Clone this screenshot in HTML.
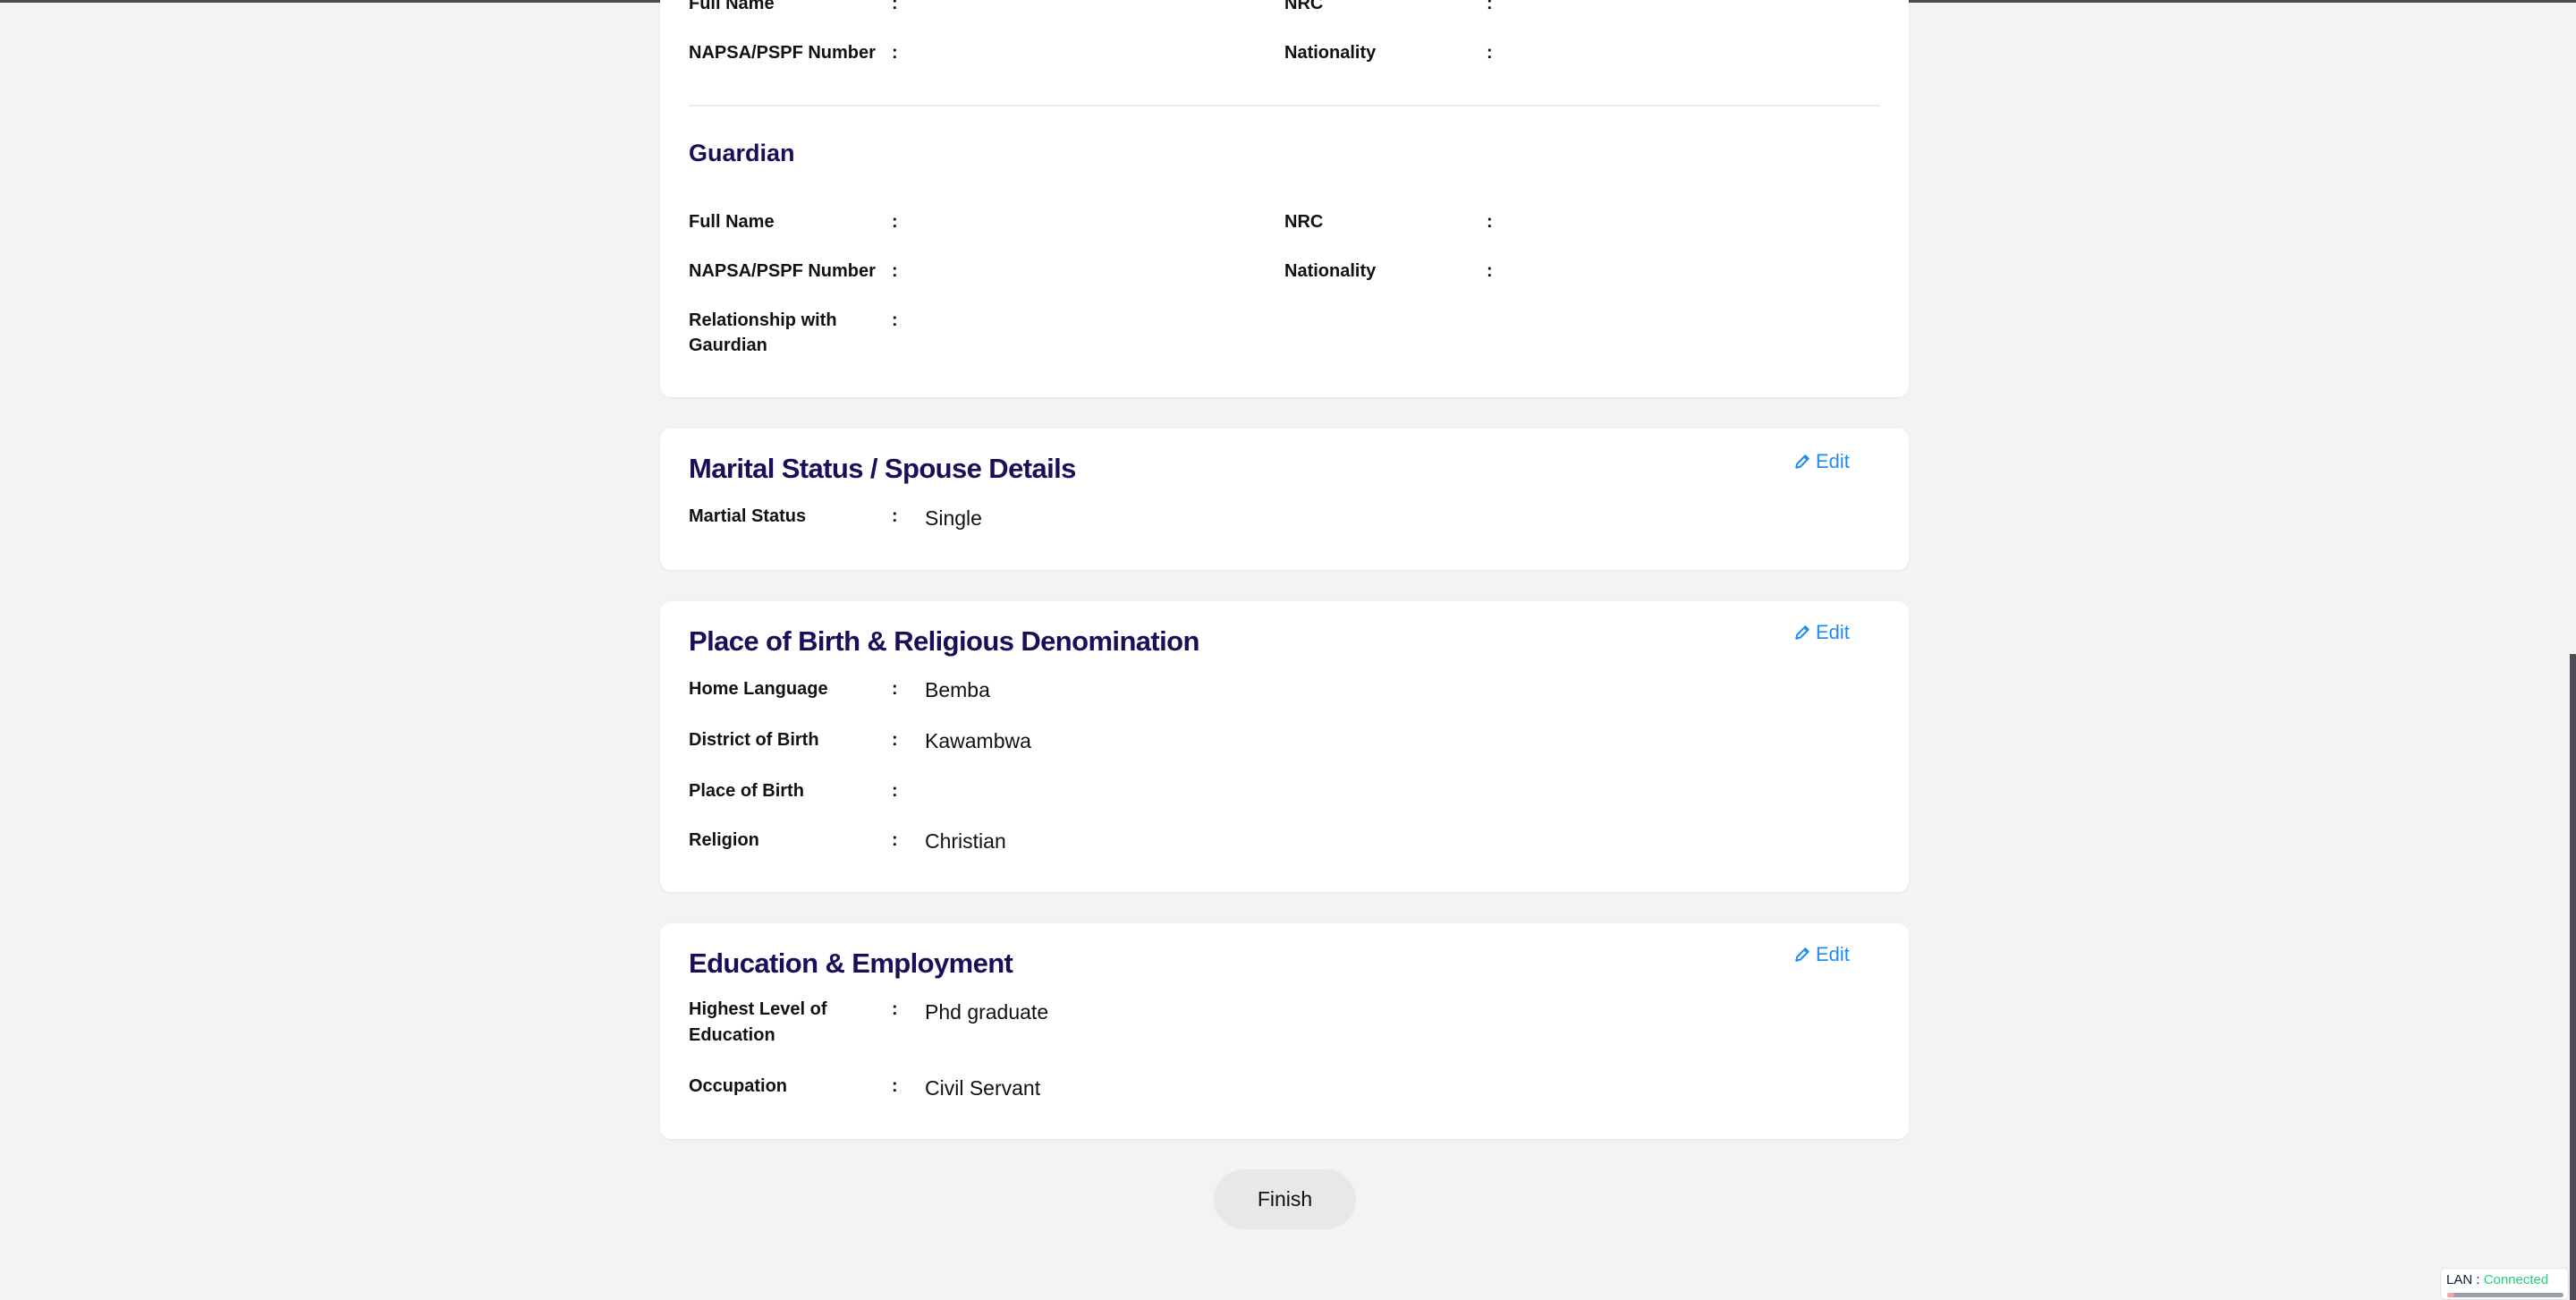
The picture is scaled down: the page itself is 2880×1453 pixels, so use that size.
<!DOCTYPE html>
<html><head><meta charset="utf-8"><style>
html,body{margin:0;padding:0;}
body{width:2880px;height:1453px;background:#f3f3f3;position:relative;overflow:hidden;font-family:"Liberation Sans",sans-serif;color:#111;}
.topbar{position:absolute;left:0;top:0;width:2880px;height:3px;background:#4b4f55;}
.card{position:absolute;left:738px;width:1396px;background:#fff;border-radius:12px;box-shadow:0 1px 2px rgba(0,0,0,0.06);}
.t{position:absolute;line-height:30px;height:30px;white-space:nowrap;margin-top:2px;}
.lb{font-size:20px;font-weight:600;color:#111;}
.v{font-size:23px;color:#111;}
.h{font-size:31px;font-weight:600;color:#1a0d5a;letter-spacing:-0.6px;line-height:40px;height:40px;}
.edit{font-size:22px;color:#1e8cf0;}
.sb{position:absolute;left:2873px;top:731px;width:7px;height:722px;background:#4b4f55;}
</style></head><body>
<div class="topbar"></div>

<div class="card" style="top:-20px;height:464px;"></div>
<div class="t lb" style="left:770px;top:-13px;">Full Name</div>
<div class="t lb" style="left:997px;top:-13px;">:</div>
<div class="t lb" style="left:1436px;top:-13px;">NRC</div>
<div class="t lb" style="left:1662px;top:-13px;">:</div>
<div class="t lb" style="left:770px;top:42px;">NAPSA/PSPF Number</div>
<div class="t lb" style="left:997px;top:42px;">:</div>
<div class="t lb" style="left:1436px;top:42px;">Nationality</div>
<div class="t lb" style="left:1662px;top:42px;">:</div>
<div style="position:absolute;left:770px;top:117px;width:1332px;height:2px;background:#ececec;"></div>
<div class="t" style="left:770px;top:154px;font-size:27px;font-weight:700;color:#1a0d5a;">Guardian</div>
<div class="t lb" style="left:770px;top:231px;">Full Name</div>
<div class="t lb" style="left:997px;top:231px;">:</div>
<div class="t lb" style="left:1436px;top:231px;">NRC</div>
<div class="t lb" style="left:1662px;top:231px;">:</div>
<div class="t lb" style="left:770px;top:286px;">NAPSA/PSPF Number</div>
<div class="t lb" style="left:997px;top:286px;">:</div>
<div class="t lb" style="left:1436px;top:286px;">Nationality</div>
<div class="t lb" style="left:1662px;top:286px;">:</div>
<div class="t lb" style="left:770px;top:341px;">Relationship with</div>
<div class="t lb" style="left:770px;top:369px;">Gaurdian</div>
<div class="t lb" style="left:997px;top:341px;">:</div>

<div class="card" style="top:479px;height:158px;"></div>
<div class="t h" style="left:770px;top:502px;">Marital Status / Spouse Details</div>
<div class="t edit" style="left:2006px;top:499px;"><svg width="18" height="18" viewBox="0 0 16 16" style="vertical-align:-2px;margin-right:6px"><path d="M2 14l1-4 8-8 3 3-8 8z M10 3l3 3" fill="none" stroke="#1e8cf0" stroke-width="1.8" stroke-linejoin="round"/></svg>Edit</div>
<div class="t lb" style="left:770px;top:560px;">Martial Status</div>
<div class="t lb" style="left:997px;top:560px;">:</div>
<div class="t v" style="left:1034px;top:562px;">Single</div>

<div class="card" style="top:672px;height:325px;"></div>
<div class="t h" style="left:770px;top:695px;">Place of Birth &amp; Religious Denomination</div>
<div class="t edit" style="left:2006px;top:690px;"><svg width="18" height="18" viewBox="0 0 16 16" style="vertical-align:-2px;margin-right:6px"><path d="M2 14l1-4 8-8 3 3-8 8z M10 3l3 3" fill="none" stroke="#1e8cf0" stroke-width="1.8" stroke-linejoin="round"/></svg>Edit</div>
<div class="t lb" style="left:770px;top:753px;">Home Language</div>
<div class="t lb" style="left:997px;top:753px;">:</div>
<div class="t v" style="left:1034px;top:754px;">Bemba</div>
<div class="t lb" style="left:770px;top:810px;">District of Birth</div>
<div class="t lb" style="left:997px;top:810px;">:</div>
<div class="t v" style="left:1034px;top:811px;">Kawambwa</div>
<div class="t lb" style="left:770px;top:867px;">Place of Birth</div>
<div class="t lb" style="left:997px;top:867px;">:</div>
<div class="t lb" style="left:770px;top:922px;">Religion</div>
<div class="t lb" style="left:997px;top:922px;">:</div>
<div class="t v" style="left:1034px;top:923px;">Christian</div>

<div class="card" style="top:1032px;height:241px;"></div>
<div class="t h" style="left:770px;top:1055px;">Education &amp; Employment</div>
<div class="t edit" style="left:2006px;top:1050px;"><svg width="18" height="18" viewBox="0 0 16 16" style="vertical-align:-2px;margin-right:6px"><path d="M2 14l1-4 8-8 3 3-8 8z M10 3l3 3" fill="none" stroke="#1e8cf0" stroke-width="1.8" stroke-linejoin="round"/></svg>Edit</div>
<div class="t lb" style="left:770px;top:1111px;">Highest Level of</div>
<div class="t lb" style="left:770px;top:1140px;">Education</div>
<div class="t lb" style="left:997px;top:1111px;">:</div>
<div class="t v" style="left:1034px;top:1114px;">Phd graduate</div>
<div class="t lb" style="left:770px;top:1197px;">Occupation</div>
<div class="t lb" style="left:997px;top:1197px;">:</div>
<div class="t v" style="left:1034px;top:1199px;">Civil Servant</div>

<div style="position:absolute;left:1357px;top:1307px;width:159px;height:67px;border-radius:34px;background:#e8e8ea;font-size:23px;line-height:67px;text-align:center;color:#111;">Finish</div>

<div class="sb"></div>
<div style="position:absolute;left:2728px;top:1417px;width:144px;height:36px;background:#fff;border-radius:6px;border:1px solid #e6e6e6;box-sizing:border-box;">
<div style="position:absolute;left:6px;top:4px;font-size:15px;line-height:18px;white-space:nowrap;"><span style="color:#0b1a3a">LAN : </span><span style="color:#1fd17a">Connected</span></div>
<div style="position:absolute;left:7px;top:27px;width:130px;height:5px;background:#9aa0a8;border-radius:3px;"><div style="width:8px;height:5px;background:#f4a0a8;border-radius:3px;"></div></div>
</div>
</body></html>
